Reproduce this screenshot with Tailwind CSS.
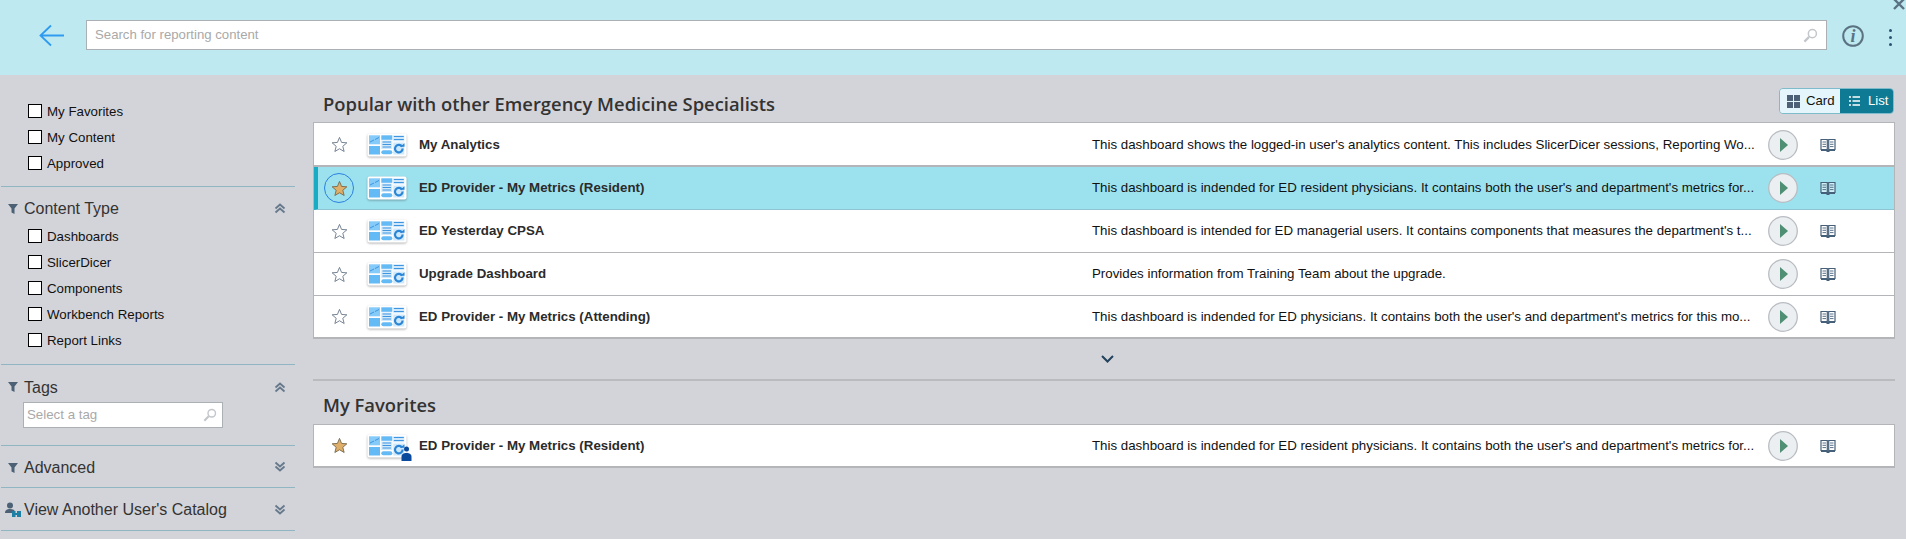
<!DOCTYPE html>
<html lang="en">
<head>
  <meta charset="UTF-8">
  <title>Reporting Library</title>
  <script src="https://cdn.jsdelivr.net/npm/@tailwindcss/browser@4"></script>
</head>
<body class="bg-[#d3d4d9] h-[539px] overflow-hidden font-['Liberation_Sans',Arial,sans-serif] text-[13.3px] text-[#222]">
  <svg class="hidden">
    <symbol id="dash" viewBox="0 0 40 24">
      <rect x="0.500" y="0.500" width="39" height="23" rx="2" fill="#fff"/>
      <rect x="2" y="2.300" width="11" height="9" fill="#85cbf9"/>
      <path d="M3 9 L7 7 M8 6.500 L12 4.500" stroke="#3f95e0" stroke-width="1"/>
      <rect x="2" y="13" width="11" height="8.500" fill="#64baf5"/>
      <rect x="14.300" y="2.300" width="11" height="4.500" fill="#64baf5"/>
      <rect x="14.300" y="7.500" width="11" height="8.500" fill="#cfe9fb"/>
      <path d="M15.500 9h8.500M15.500 11.500h8.500M15.500 14h8.500" stroke="#3f95e0" stroke-width="1"/>
      <rect x="14.300" y="17.300" width="11" height="4" rx="2" fill="#64baf5"/>
      <rect x="26.300" y="2.300" width="11" height="6" fill="#cfe9fb"/>
      <path d="M26.800 3.500h10M26.800 6.500h10" stroke="#3f95e0" stroke-width="1"/>
      <rect x="26.300" y="9.500" width="11" height="12" fill="#cfe9fb"/>
      <path d="M35 13.600a3.800 3.800 0 1 0 .6 2" fill="none" stroke="#2b86d6" stroke-width="2.200"/>
      <path d="M33 13.800h4.500v-3.600Z" fill="#2b86d6"/>
    </symbol>
    <symbol id="star" viewBox="0 0 18 18">
      <path d="M9 1.500 11.200 6.800 16.800 7.200 12.500 10.900 13.900 16.400 9 13.500 4.100 16.400 5.500 10.900 1.200 7.200 6.800 6.800Z" stroke="#6d7c8d" stroke-width="1" fill="none"/>
    </symbol>
    <symbol id="starOn" viewBox="0 0 18 18">
      <path d="M9 1.500 11.200 6.800 16.800 7.200 12.500 10.900 13.900 16.400 9 13.500 4.100 16.400 5.500 10.900 1.200 7.200 6.800 6.800Z" stroke="#7a6c4f" stroke-width="1" fill="#dfae68"/>
    </symbol>
    <symbol id="play" viewBox="0 0 30 30">
      <circle cx="15" cy="15" r="14.300" fill="#eceff2" stroke="#b9bdc2" stroke-width="1.300"/>
      <path d="M12 8 L20 15 L12 22Z" fill="#4f8f73"/>
    </symbol>
    <symbol id="book" viewBox="0 0 16 14">
      <path d="M1 1.500h6.300v10H1ZM8.700 1.500H15v10H8.700Z" fill="#fff" fill-opacity="0.5" stroke="#46607a" stroke-width="1.200"/>
      <path d="M2.500 4h3.500M2.500 6.300h3.500M2.500 8.600h3.500M10 4h3.500M10 6.300h3.500M10 8.600h3.500" stroke="#46607a" stroke-width="0.900"/>
      <path d="M1 12.300h14M6.500 13.300h3" stroke="#46607a" stroke-width="1.200"/>
    </symbol>
    <symbol id="funnel" viewBox="0 0 10 10">
      <path d="M0 0h10L6.500 4.500V10L3.500 8.500V4.500Z" fill="#4c6176"/>
    </symbol>
    <symbol id="up" viewBox="0 0 12 11">
      <path d="M1.500 5.500 6 1.500l4.500 4M1.500 9.500 6 5.500l4.500 4" fill="none" stroke="#66798c" stroke-width="1.800"/>
    </symbol>
    <symbol id="down" viewBox="0 0 12 11">
      <path d="M1.500 1.500 6 5.500l4.500-4M1.500 5.500 6 9.500l4.500-4" fill="none" stroke="#66798c" stroke-width="1.800"/>
    </symbol>
    <symbol id="lens" viewBox="0 0 16 16">
      <circle cx="10" cy="6" r="4.300" fill="none" stroke="#c3c6ca" stroke-width="1.600"/>
      <path d="M6.500 9.500 1.500 14.500" stroke="#c3c6ca" stroke-width="2.400"/>
    </symbol>
  </svg>

  <header class="h-[75px] bg-[#bee9f0] relative flex items-start pt-5">
    <div class="w-[86px] shrink-0 pl-[38px]">
      <svg class="w-[27px] h-[23px] mt-[4px]" viewBox="0 0 27 23"><path d="M13 1.500 2.500 11.500 13 21.500M2.500 11.500H26" fill="none" stroke="#2f9bf0" stroke-width="1.800"/></svg>
    </div>
    <div class="w-[1741px] h-[30px] bg-white border border-[#aab0b3] flex items-center justify-between pl-2 pr-[8px] text-[#a9a9a9] text-[13.2px]">
      <span>Search for reporting content</span>
      <svg class="w-[15px] h-[15px]"><use href="#lens"/></svg>
    </div>
    <svg class="w-[22px] h-[22px] ml-[15px] mt-[5px]" viewBox="0 0 22 22">
      <circle cx="11" cy="11" r="9.800" fill="none" stroke="#5b7283" stroke-width="2"/>
      <text x="11" y="17" text-anchor="middle" font-family="Liberation Serif" font-style="italic" font-weight="700" font-size="18" fill="#5b7283">i</text>
    </svg>
    <div class="ml-[25px] mt-[9px] flex flex-col gap-[4px]">
      <span class="w-[3px] h-[3px] rounded-full bg-[#2d5170]"></span>
      <span class="w-[3px] h-[3px] rounded-full bg-[#2d5170]"></span>
      <span class="w-[3px] h-[3px] rounded-full bg-[#2d5170]"></span>
    </div>
    <svg class="absolute right-[1px] top-0 w-[12px] h-[10px]" viewBox="0 0 12 10"><path d="M1 -1 11 9M11 -1 1 9" stroke="#5b7283" stroke-width="2.400"/></svg>
  </header>

  <div class="flex h-[464px]">
    <aside class="w-[294px] ml-[1px] shrink-0 text-[#111]">
      <section class="h-[112px] border-b border-[#8fb6c2] pt-[29px] pl-[27px] flex flex-col gap-3">
        <label class="flex items-center gap-[5px] h-[14px]"><span class="w-[14px] h-[14px] border border-black bg-white"></span><span class="mt-[2px]">My Favorites</span></label>
        <label class="flex items-center gap-[5px] h-[14px]"><span class="w-[14px] h-[14px] border border-black bg-white"></span><span class="mt-[2px]">My Content</span></label>
        <label class="flex items-center gap-[5px] h-[14px]"><span class="w-[14px] h-[14px] border border-black bg-white"></span><span class="mt-[2px]">Approved</span></label>
      </section>

      <section class="h-[178px] border-b border-[#8fb6c2] pt-[12px]">
        <div class="flex items-center h-[18px] pl-[7px] pr-[8px] text-[16px] text-[#333]">
          <svg class="w-[10px] h-[10px] mr-[6px] mt-[2px]"><use href="#funnel"/></svg>
          <span class="mt-[2px]">Content Type</span>
          <svg class="w-[12px] h-[11px] ml-auto mr-[1px]"><use href="#up"/></svg>
        </div>
        <div class="pl-[27px] mt-[12px] flex flex-col gap-3">
          <label class="flex items-center gap-[5px] h-[14px]"><span class="w-[14px] h-[14px] border border-black bg-white"></span><span class="mt-[2px]">Dashboards</span></label>
          <label class="flex items-center gap-[5px] h-[14px]"><span class="w-[14px] h-[14px] border border-black bg-white"></span><span class="mt-[2px]">SlicerDicer</span></label>
          <label class="flex items-center gap-[5px] h-[14px]"><span class="w-[14px] h-[14px] border border-black bg-white"></span><span class="mt-[2px]">Components</span></label>
          <label class="flex items-center gap-[5px] h-[14px]"><span class="w-[14px] h-[14px] border border-black bg-white"></span><span class="mt-[2px]">Workbench Reports</span></label>
          <label class="flex items-center gap-[5px] h-[14px]"><span class="w-[14px] h-[14px] border border-black bg-white"></span><span class="mt-[2px]">Report Links</span></label>
        </div>
      </section>

      <section class="h-[81px] border-b border-[#8fb6c2] pt-[13px]">
        <div class="flex items-center h-[18px] pl-[7px] pr-[8px] text-[16px] text-[#333]">
          <svg class="w-[10px] h-[10px] mr-[6px]"><use href="#funnel"/></svg>
          <span class="mt-[2px]">Tags</span>
          <svg class="w-[12px] h-[11px] ml-auto mr-[1px]"><use href="#up"/></svg>
        </div>
        <div class="ml-[22px] mt-[6px] w-[200px] h-[26px] bg-white border border-[#aab0b3] flex items-center justify-between pl-[3px] pr-[5px] text-[#a9a9a9]">
          <span>Select a tag</span>
          <svg class="w-[14px] h-[14px]"><use href="#lens"/></svg>
        </div>
      </section>

      <section class="h-[42px] border-b border-[#8fb6c2] flex items-center pl-[7px] pr-[9px] text-[16px] text-[#333]">
        <svg class="w-[10px] h-[10px] mr-[6px] mt-[2px]"><use href="#funnel"/></svg>
        <span class="mt-[2px]">Advanced</span>
        <svg class="w-[12px] h-[11px] ml-auto"><use href="#down"/></svg>
      </section>

      <section class="h-[43px] border-b border-[#8fb6c2] flex items-center pl-[4px] pr-[9px] text-[16px] text-[#333]">
        <svg class="w-[17px] h-[16px] mr-[2px] mt-[2px]" viewBox="0 0 17 16">
          <circle cx="5" cy="3.500" r="3" fill="#4c6176"/>
          <path d="M0 11c0-3 2-4 5-4s5 1 5 3v1Z" fill="#4c6176"/>
          <path d="M7 9h3.500v6H7ZM12 9h4v6h-4ZM9 11h4v2H9Z" fill="#1d7fa3"/>
        </svg>
        <span class="mt-[2px]">View Another User's Catalog</span>
        <svg class="w-[12px] h-[11px] ml-auto"><use href="#down"/></svg>
      </section>
    </aside>

    <main class="w-[1582px] ml-[18px] shrink-0">
      <div class="flex items-start justify-between h-[47px] pl-[10px]">
        <h2 class="font-['Open_Sans',sans-serif] text-[18.4px] leading-[26px] font-semibold text-[#333] mt-[16px]">Popular with other Emergency Medicine Specialists</h2>
        <div class="flex h-[26px] w-[115px] mt-[13px] mr-[1px] rounded-[4px] border border-[#7fbccb] overflow-hidden text-[13.2px]">
          <div class="w-[60px] bg-[#e4f6fb] flex items-center gap-[6px] pl-[7px] text-[#111]">
            <svg class="w-[13px] h-[13px]" viewBox="0 0 13 13"><path d="M0 0h6v6H0ZM7 0h6v6H7ZM0 7h6v6H0ZM7 7h6v6H7Z" fill="#4c6176"/></svg>
            Card
          </div>
          <div class="flex-1 bg-[#0e7a93] flex items-center gap-[8px] pl-[9px] text-white">
            <svg class="w-[11px] h-[10px]" viewBox="0 0 11 10"><path d="M0 1h2M3.500 1H11M0 5h2M3.500 5H11M0 9h2M3.500 9H11" stroke="#fff" stroke-width="1.300"/></svg>
            List
          </div>
        </div>
      </div>

      <div class="border border-[#b3b5b8] border-b-2 bg-white">
        <div class="flex items-center h-[44px] pt-[1px] border-b-2 border-[#b3b5b8]">
          <svg class="w-[17px] h-[17px] ml-[17px] shrink-0"><use href="#star"/></svg>
          <svg class="w-[40px] h-[24px] ml-[19px] shrink-0 drop-shadow-[0_1px_1px_rgba(0,0,0,0.3)]"><use href="#dash"/></svg>
          <span class="ml-[12px] w-[673px] shrink-0 font-bold text-[#2b2b2b]">My Analytics</span>
          <span class="w-[668px] shrink-0 whitespace-nowrap text-[#111]">This dashboard shows the logged-in user's analytics content. This includes SlicerDicer sessions, Reporting Wo...</span>
          <svg class="w-[30px] h-[30px] ml-[8px] shrink-0"><use href="#play"/></svg>
          <svg class="w-[16px] h-[14px] ml-[22px] shrink-0"><use href="#book"/></svg>
        </div>
        <div class="flex items-center h-[43px] border-b border-[#8fc5d2] border-l-4 border-l-[#17acc4] bg-[#9ce2ee]">
          <span class="ml-[6px] w-[30px] h-[30px] shrink-0 rounded-full border border-[#2a80e0] flex items-center justify-center">
            <svg class="w-[17px] h-[17px]"><use href="#starOn"/></svg>
          </span>
          <svg class="w-[40px] h-[24px] ml-[13px] shrink-0 drop-shadow-[0_1px_1px_rgba(0,0,0,0.3)]"><use href="#dash"/></svg>
          <span class="ml-[12px] w-[673px] shrink-0 font-bold text-[#2b2b2b]">ED Provider - My Metrics (Resident)</span>
          <span class="w-[668px] shrink-0 whitespace-nowrap text-[#111]">This dashboard is indended for ED resident physicians. It contains both the user's and department's metrics for...</span>
          <svg class="w-[30px] h-[30px] ml-[8px] shrink-0"><use href="#play"/></svg>
          <svg class="w-[16px] h-[14px] ml-[22px] shrink-0"><use href="#book"/></svg>
        </div>
        <div class="flex items-center h-[43px] border-b border-[#b3b5b8]">
          <svg class="w-[17px] h-[17px] ml-[17px] shrink-0"><use href="#star"/></svg>
          <svg class="w-[40px] h-[24px] ml-[19px] shrink-0 drop-shadow-[0_1px_1px_rgba(0,0,0,0.3)]"><use href="#dash"/></svg>
          <span class="ml-[12px] w-[673px] shrink-0 font-bold text-[#2b2b2b]">ED Yesterday CPSA</span>
          <span class="w-[668px] shrink-0 whitespace-nowrap text-[#111]">This dashboard is intended for ED managerial users. It contains components that measures the department's t...</span>
          <svg class="w-[30px] h-[30px] ml-[8px] shrink-0"><use href="#play"/></svg>
          <svg class="w-[16px] h-[14px] ml-[22px] shrink-0"><use href="#book"/></svg>
        </div>
        <div class="flex items-center h-[43px] border-b border-[#b3b5b8]">
          <svg class="w-[17px] h-[17px] ml-[17px] shrink-0"><use href="#star"/></svg>
          <svg class="w-[40px] h-[24px] ml-[19px] shrink-0 drop-shadow-[0_1px_1px_rgba(0,0,0,0.3)]"><use href="#dash"/></svg>
          <span class="ml-[12px] w-[673px] shrink-0 font-bold text-[#2b2b2b]">Upgrade Dashboard</span>
          <span class="w-[668px] shrink-0 whitespace-nowrap text-[#111]">Provides information from Training Team about the upgrade.</span>
          <svg class="w-[30px] h-[30px] ml-[8px] shrink-0"><use href="#play"/></svg>
          <svg class="w-[16px] h-[14px] ml-[22px] shrink-0"><use href="#book"/></svg>
        </div>
        <div class="flex items-center h-[41px]">
          <svg class="w-[17px] h-[17px] ml-[17px] shrink-0"><use href="#star"/></svg>
          <svg class="w-[40px] h-[24px] ml-[19px] shrink-0 drop-shadow-[0_1px_1px_rgba(0,0,0,0.3)]"><use href="#dash"/></svg>
          <span class="ml-[12px] w-[673px] shrink-0 font-bold text-[#2b2b2b]">ED Provider - My Metrics (Attending)</span>
          <span class="w-[668px] shrink-0 whitespace-nowrap text-[#111]">This dashboard is indended for ED physicians. It contains both the user's and department's metrics for this mo...</span>
          <svg class="w-[30px] h-[30px] ml-[8px] shrink-0"><use href="#play"/></svg>
          <svg class="w-[16px] h-[14px] ml-[22px] shrink-0"><use href="#book"/></svg>
        </div>
      </div>

      <div class="h-[42px] border-b-2 border-[#b9bbbf] flex items-center justify-center">
        <svg class="w-[13px] h-[8px] ml-[6px]" viewBox="0 0 13 8"><path d="M1 1 6.500 6.500 12 1" fill="none" stroke="#22425e" stroke-width="2"/></svg>
      </div>

      <h2 class="font-['Open_Sans',sans-serif] text-[18.4px] font-semibold text-[#333] pl-[10px] h-[43px] leading-[48px]">My Favorites</h2>

      <div class="border border-[#b3b5b8] border-b-2 bg-white">
        <div class="flex items-center h-[41px]">
          <svg class="w-[17px] h-[17px] ml-[17px] shrink-0"><use href="#starOn"/></svg>
          <span class="relative w-[40px] h-[24px] ml-[19px] shrink-0">
            <svg class="w-[40px] h-[24px] drop-shadow-[0_1px_1px_rgba(0,0,0,0.3)]"><use href="#dash"/></svg>
            <svg class="absolute left-[34px] top-[12px] w-[11px] h-[15px]" viewBox="0 0 11 15"><circle cx="5.500" cy="3" r="2.500" fill="#0a4a9c"/><path d="M0.500 15v-4c0-3 2-4 5-4s5 1 5 4v4Z" fill="#0a4a9c"/></svg>
          </span>
          <span class="ml-[12px] w-[673px] shrink-0 font-bold text-[#2b2b2b]">ED Provider - My Metrics (Resident)</span>
          <span class="w-[668px] shrink-0 whitespace-nowrap text-[#111]">This dashboard is indended for ED resident physicians. It contains both the user's and department's metrics for...</span>
          <svg class="w-[30px] h-[30px] ml-[8px] shrink-0"><use href="#play"/></svg>
          <svg class="w-[16px] h-[14px] ml-[22px] shrink-0"><use href="#book"/></svg>
        </div>
      </div>
    </main>
  </div>
</body>
</html>
